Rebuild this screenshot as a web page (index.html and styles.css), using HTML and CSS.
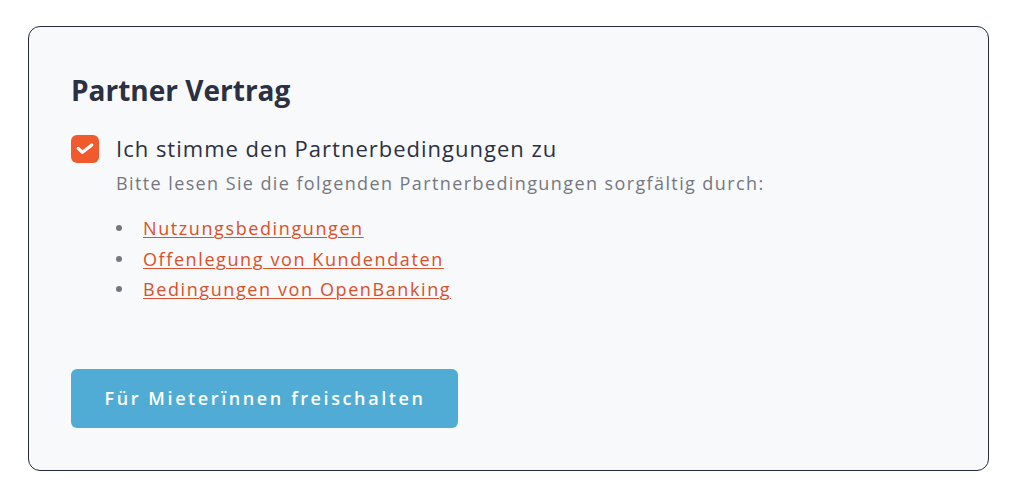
FILE: index.html
```html
<!DOCTYPE html>
<html lang="de">
<head>
<meta charset="utf-8">
<title>Partner Vertrag</title>
<link rel="stylesheet" href="styles.css">
</head>
<body>
<section class="card">
  <h2 class="title">Partner Vertrag</h2>
  <div class="agree">
    <span class="check" aria-hidden="true">
      <svg viewBox="0 0 28 28" width="28" height="28"><path d="M7.2 13.4 L11.4 17.3 L20.8 10" fill="none" stroke="#fff" stroke-width="3.2" stroke-linecap="round" stroke-linejoin="round"/></svg>
    </span>
    <div class="agree-text">
      <div class="label">Ich stimme den Partnerbedingungen zu</div>
      <div class="hint">Bitte lesen Sie die folgenden Partnerbedingungen sorgfältig durch:</div>
      <ul class="links">
        <li><a href="#">Nutzungsbedingungen</a></li>
        <li><a href="#">Offenlegung von Kundendaten</a></li>
        <li><a href="#">Bedingungen von OpenBanking</a></li>
      </ul>
    </div>
  </div>
  <button class="btn" type="button">Für Mieterïnnen freischalten</button>
</section>
</body>
</html>
```

FILE: styles.css
```css
* { box-sizing: border-box; }
html, body { margin: 0; background: #ffffff; }
body {
  padding: 26px 28px;
  font-family: "Open Sans", "Liberation Sans", sans-serif;
}
.card {
  width: 961px;
  height: 445px;
  border: 1px solid #252a3a;
  border-radius: 12px;
  background: #f8f9fb;
  padding: 45px 42px 0 42px;
}
.title {
  margin: 0;
  font-size: 28px;
  line-height: 36px;
  font-weight: 700;
  letter-spacing: 0;
  color: #2b3042;
}
.agree {
  display: flex;
  align-items: flex-start;
  gap: 17px;
  margin-top: 26px;
}
.check {
  flex: none;
  width: 28px;
  height: 28px;
  margin-top: 1px;
  border-radius: 6px;
  background: #f15a2c;
  display: flex;
}
.agree-text { display: flex; flex-direction: column; }
.label {
  font-size: 22px;
  line-height: 28px;
  letter-spacing: 1px;
  color: #2d3142;
}
.hint {
  margin-top: 7px;
  font-size: 18px;
  line-height: 28px;
  letter-spacing: 1.4px;
  color: #75787f;
}
.links {
  margin: 16px 0 0 0;
  padding: 0;
  list-style: none;
}
.links li {
  display: flex;
  align-items: center;
  font-size: 18px;
  line-height: 30.5px;
}
.links li::before {
  content: "";
  flex: none;
  width: 6px;
  height: 6px;
  border-radius: 50%;
  background: #74777e;
  margin-right: 21px;
}
.links a {
  color: #d9502a;
  letter-spacing: 1.6px;
  text-decoration: underline;
  text-underline-offset: 2px;
  text-decoration-thickness: 1px;
}
.btn {
  display: block;
  margin-top: 64px;
  width: 387px;
  height: 59px;
  border: 0;
  border-radius: 6px;
  background: #50acd4;
  color: #ffffff;
  font-family: "Open Sans", "Liberation Sans", sans-serif;
  font-size: 18px;
  font-weight: 600;
  letter-spacing: 2.6px;
  padding: 0 0 0 1px;
}
```
